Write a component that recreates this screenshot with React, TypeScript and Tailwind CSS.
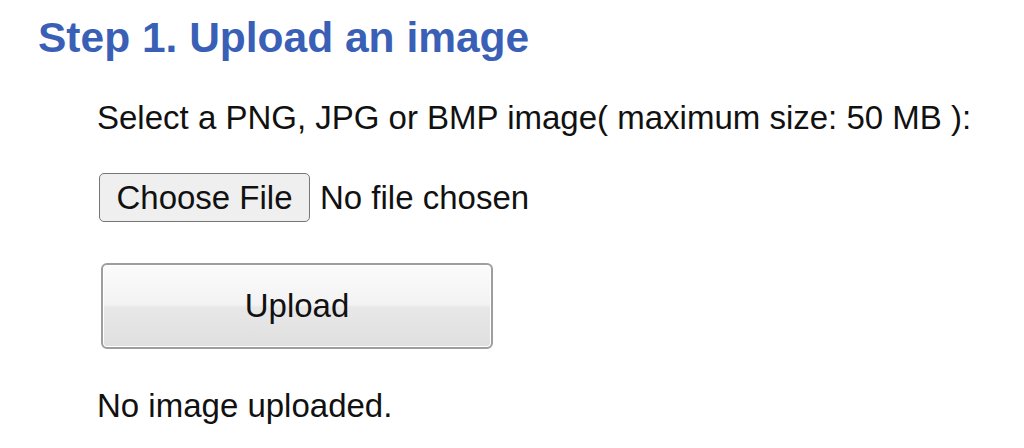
export default function App() {
  return (
    <div className="min-h-[448px] w-[1024px] bg-white font-['Liberation_Sans',Arial,sans-serif] text-[#111]">
      <h1 className="pl-[38px] pt-[14px] text-[42.5px] font-bold leading-[48px] text-[#3a5fb6]">
        Step 1. Upload an image
      </h1>

      <div className="pl-[97px] text-[33px] leading-[38px]">
        <p className="mt-[37px]">Select a PNG, JPG or BMP image( maximum size: 50 MB ):</p>

        {/* file picker, drawn to look like the browser control */}
        <div className="mt-[36px] flex items-center">
          <button
            type="button"
            className="ml-[2px] flex h-[49px] w-[211px] items-center justify-center rounded-[5px] border border-[#767676] bg-[#efefef] leading-[38px]"
          >
            Choose File
          </button>
          <span className="ml-[10px]">No file chosen</span>
        </div>

        <button
          type="button"
          className="mt-[41px] ml-[4px] flex h-[86px] w-[392px] items-center justify-center rounded-[6px] border-2 border-[#9e9e9e] bg-[linear-gradient(#fbfbfb_0%,#f3f3f3_48%,#e8e8e8_52%,#dfdfdf_100%)] leading-[38px] shadow-[inset_0_0_0_1px_#ffffff]"
        >
          Upload
        </button>

        <p className="mt-[38px]">No image uploaded.</p>
      </div>
    </div>
  )
}
